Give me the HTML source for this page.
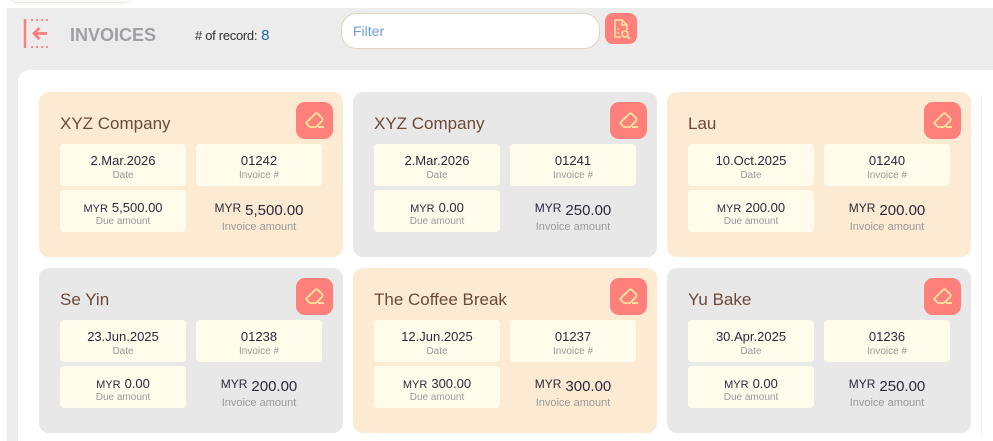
<!DOCTYPE html>
<html><head><meta charset="utf-8"><style>
*{box-sizing:border-box;margin:0;padding:0}
body{width:993px;height:441px;overflow:hidden;background:#fff;font-family:"Liberation Sans",sans-serif;position:relative}
.tab{position:absolute;left:10px;top:-6px;width:120px;height:9px;border-radius:0 0 6px 6px;background:#fff;border:1px solid #f0e2d6}
.gray{position:absolute;left:7px;top:8px;width:986px;height:433px;background:#ececec}
.panel{position:absolute;left:18px;top:70px;width:975px;height:371px;background:#fff;border-radius:12px 0 0 0}
.vline{position:absolute;left:981px;top:95px;width:1px;height:340px;background:#eee}
.title{position:absolute;left:70px;top:25px;font-size:18px;font-weight:bold;color:#a0a0a4}
.rec{position:absolute;left:195px;top:27px;font-size:13px;color:#333;letter-spacing:-0.3px}
.rec b{font-weight:normal;color:#1a6aa0;font-size:15px;margin-left:4px}
.filter{position:absolute;left:341px;top:13px;width:259px;height:36px;border:1px solid #e3d3c5;border-radius:16px;background:#fff;font-size:14px;color:#6a9fd6;padding:9px 11px}
.sbtn{position:absolute;left:605px;top:13px;width:32px;height:31px;border-radius:8px;background:#ff7f7a}
.card{position:absolute;width:304px;height:165px;border-radius:10px}
.p{background:#fdead3}.g{background:#e8e8e8}
.card h2{position:absolute;left:21px;top:22px;font-size:17px;font-weight:normal;color:#6b4a3a}
.ed{position:absolute;left:257px;top:10px;width:37px;height:37px;border-radius:9px;background:#ff7f7a}
.ed svg{position:absolute;left:6px;top:6px}
.bx{position:absolute;width:126px;height:42px;background:#fffcec;border-radius:4px;text-align:center}
.v{font-size:13px;color:#2a2a3a;margin-top:9px}
.l{font-size:10px;color:#999;margin-top:2px}
.cur{font-size:11px;margin-right:4px}
.ia{position:absolute;left:157px;top:109px;width:126px;text-align:center}
.ia .v{font-size:15px;margin-top:0}
</style></head><body>
<div class="tab"></div>
<div class="gray"></div>
<div class="panel"></div>
<div class="vline"></div>
<svg style="position:absolute;left:22px;top:17px" width="32" height="32" viewBox="0 0 32 32">
<line x1="3" y1="2" x2="3" y2="31" stroke="#ff7f7a" stroke-width="2.5"/>
<g fill="#ff7f7a"><circle cx="10" cy="3" r="1.1"/><circle cx="15" cy="3" r="1.1"/><circle cx="20" cy="3" r="1.1"/><circle cx="25" cy="3" r="1.1"/><circle cx="10" cy="30" r="1.1"/><circle cx="15" cy="30" r="1.1"/><circle cx="20" cy="30" r="1.1"/><circle cx="25" cy="30" r="1.1"/></g>
<path d="M12 16.5h13M17.5 11l-5.5 5.5 5.5 5.5" stroke="#ff7f7a" stroke-width="2.8" fill="none"/>
</svg>
<div class="title">INVOICES</div>
<div class="rec"># of record:<b>8</b></div>
<div class="filter">Filter</div>
<div class="sbtn"><svg width="32" height="31" viewBox="0 0 32 31"><path d="M10 7h7l5 5v5M10 7v17h6M17 7v5h5" stroke="#fde7a0" stroke-width="1.6" fill="none"/><path d="M12 16h2M12 20h2" stroke="#fde7a0" stroke-width="1.6"/><circle cx="20" cy="21" r="3" stroke="#fde7a0" stroke-width="1.6" fill="none"/><path d="M22 23l3 3" stroke="#fde7a0" stroke-width="1.8"/></svg></div>

<div id="cards"></div>
<script>
var d=[["p","XYZ Company","2.Mar.2026","01242","5,500.00","5,500.00",39,92],
["g","XYZ Company","2.Mar.2026","01241","0.00","250.00",353,92],
["p","Lau","10.Oct.2025","01240","200.00","200.00",667,92],
["g","Se Yin","23.Jun.2025","01238","0.00","200.00",39,268],
["p","The Coffee Break","12.Jun.2025","01237","300.00","300.00",353,268],
["g","Yu Bake","30.Apr.2025","01236","0.00","250.00",667,268]];
var ic='<svg width="25" height="25" viewBox="0 0 25 25"><path d="M4 15L13 6a2 2 0 0 1 3 0l4 4a2 2 0 0 1 0 3l-6 6H8z" stroke="#fde7a0" stroke-width="1.8" fill="none" stroke-linejoin="round"/><path d="M16 19h6" stroke="#fde7a0" stroke-width="1.8"/></svg>';
var h='';d.forEach(function(c){h+='<div class="card '+c[0]+'" style="left:'+c[6]+'px;top:'+c[7]+'px"><h2>'+c[1]+'</h2><div class="ed">'+ic+'</div>'+
'<div class="bx" style="left:21px;top:52px"><div class="v">'+c[2]+'</div><div class="l">Date</div></div>'+
'<div class="bx" style="left:157px;top:52px"><div class="v">'+c[3]+'</div><div class="l">Invoice #</div></div>'+
'<div class="bx" style="left:21px;top:98px"><div class="v" style="margin-top:10px"><span class="cur">MYR</span>'+c[4]+'</div><div class="l" style="margin-top:1px">Due amount</div></div>'+
'<div class="ia"><div class="v"><span class="cur" style="font-size:12px;vertical-align:3px">MYR</span>'+c[5]+'</div><div class="l" style="font-size:11px">Invoice amount</div></div></div>';});
document.getElementById('cards').innerHTML=h;
</script>
</body></html>
